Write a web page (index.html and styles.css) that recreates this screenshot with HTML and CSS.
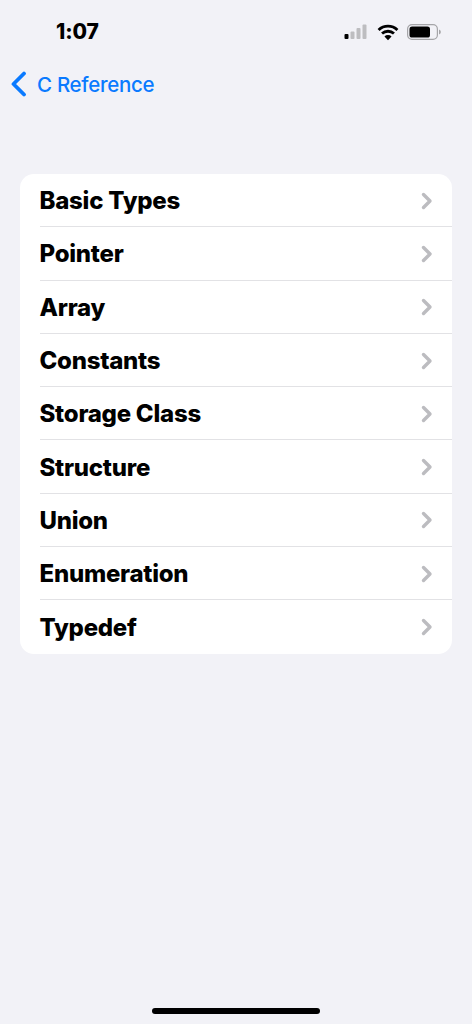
FILE: index.html
```html
<!DOCTYPE html>
<html lang="en">
<head>
<meta charset="utf-8">
<title>C Reference</title>
<link rel="stylesheet" href="styles.css">
</head>
<body>
<div class="screen">
  <header class="status">
    <span class="time">1:07</span>
    <div class="status-icons">
      <svg class="signal" width="24" height="16" viewBox="0 0 24 16">
        <rect x="0.5" y="10" width="4" height="5" rx="1" fill="#000"/>
        <rect x="6.5" y="7.5" width="4" height="7.5" rx="1" fill="#bdbdc0"/>
        <rect x="12.5" y="4" width="4" height="11" rx="1" fill="#bdbdc0"/>
        <rect x="18.5" y="0.5" width="4" height="14.5" rx="1" fill="#bdbdc0"/>
      </svg>
      <svg class="wifi" width="22" height="17" viewBox="0 0 21 16">
        <path d="M1.500 5.600a13 13 0 0 1 18 0M4.800 9a8.400 8.400 0 0 1 11.400 0" fill="none" stroke="#000" stroke-width="2.700"/>
        <path d="M10.500 15.500l-3.400-3.600a4.800 4.800 0 0 1 6.800 0z" fill="#000"/>
      </svg>
      <svg class="battery" width="34" height="16" viewBox="0 0 34 16">
        <rect x="0.600" y="0.600" width="29.800" height="14.800" rx="4.400" fill="none" stroke="#a5a5a8" stroke-width="1.200"/>
        <rect x="2.500" y="2.500" width="20.500" height="11" rx="2.600" fill="#000"/>
        <path d="M32 5.500a2.600 2.600 0 0 1 0 5z" fill="#a5a5a8"/>
      </svg>
    </div>
  </header>
  <nav class="nav">
    <svg class="back-icon" width="17" height="26" viewBox="0 0 17 26">
      <path d="M14 2.500L3.500 13 14 23.500" fill="none" stroke="#0a7aff" stroke-width="3.800" stroke-linecap="round" stroke-linejoin="round"/>
    </svg>
    <span class="back-label">C Reference</span>
  </nav>
  <ul class="list">
    <li class="row"><span class="row-label">Basic Types</span><svg class="chev" width="12" height="18" viewBox="0 0 12 18"><path d="M2.500 2.500L9 9l-6.500 6.500"/></svg></li>
    <li class="row"><span class="row-label">Pointer</span><svg class="chev" width="12" height="18" viewBox="0 0 12 18"><path d="M2.500 2.500L9 9l-6.500 6.500"/></svg></li>
    <li class="row"><span class="row-label">Array</span><svg class="chev" width="12" height="18" viewBox="0 0 12 18"><path d="M2.500 2.500L9 9l-6.500 6.500"/></svg></li>
    <li class="row"><span class="row-label">Constants</span><svg class="chev" width="12" height="18" viewBox="0 0 12 18"><path d="M2.500 2.500L9 9l-6.500 6.500"/></svg></li>
    <li class="row"><span class="row-label">Storage Class</span><svg class="chev" width="12" height="18" viewBox="0 0 12 18"><path d="M2.500 2.500L9 9l-6.500 6.500"/></svg></li>
    <li class="row"><span class="row-label">Structure</span><svg class="chev" width="12" height="18" viewBox="0 0 12 18"><path d="M2.500 2.500L9 9l-6.500 6.500"/></svg></li>
    <li class="row"><span class="row-label">Union</span><svg class="chev" width="12" height="18" viewBox="0 0 12 18"><path d="M2.500 2.500L9 9l-6.500 6.500"/></svg></li>
    <li class="row"><span class="row-label">Enumeration</span><svg class="chev" width="12" height="18" viewBox="0 0 12 18"><path d="M2.500 2.500L9 9l-6.500 6.500"/></svg></li>
    <li class="row"><span class="row-label">Typedef</span><svg class="chev" width="12" height="18" viewBox="0 0 12 18"><path d="M2.500 2.500L9 9l-6.500 6.500"/></svg></li>
  </ul>
  <div class="home-bar"></div>
</div>
</body>
</html>
```
FILE: styles.css
```css
* { box-sizing: border-box; }
html, body { margin: 0; padding: 0; }
body { background: #f2f2f7; font-family: Inter, "Liberation Sans", sans-serif; color: #000; }
.screen { position: relative; width: 472px; height: 1024px; overflow: hidden; padding-top: 19px; }
.status { display: flex; justify-content: space-between; align-items: center; height: 26px; padding: 0 31px 0 56px; }
.time { font-size: 21px; font-weight: 800; line-height: 26px; letter-spacing: -0.1px; }
.status-icons { display: flex; align-items: center; gap: 8.5px; }
.nav { display: flex; align-items: center; height: 28px; margin-top: 25px; padding-left: 10px; gap: 10px; }
.back-label { font-size: 20.5px; font-weight: 500; color: #0a7aff; letter-spacing: -0.3px; }
.list { list-style: none; margin: 76px 20px 0; padding: 0; background: #fff; border-radius: 14px; }
.row { position: relative; display: flex; align-items: center; justify-content: space-between; height: 53.3px; padding: 0 19px 0 19.5px; }
.row + .row::before { content: ""; position: absolute; top: -1px; left: 19.5px; right: 0; height: 1px; background: #e2e2e5; }
.row-label { font-size: 24px; font-weight: 800; letter-spacing: -0.25px; }
.chev { fill: none; stroke: #bcbcc0; stroke-width: 3.4; stroke-linecap: round; stroke-linejoin: round; }
.home-bar { position: absolute; left: 152px; bottom: 10px; width: 168px; height: 6px; border-radius: 3px; background: #000; }
```
